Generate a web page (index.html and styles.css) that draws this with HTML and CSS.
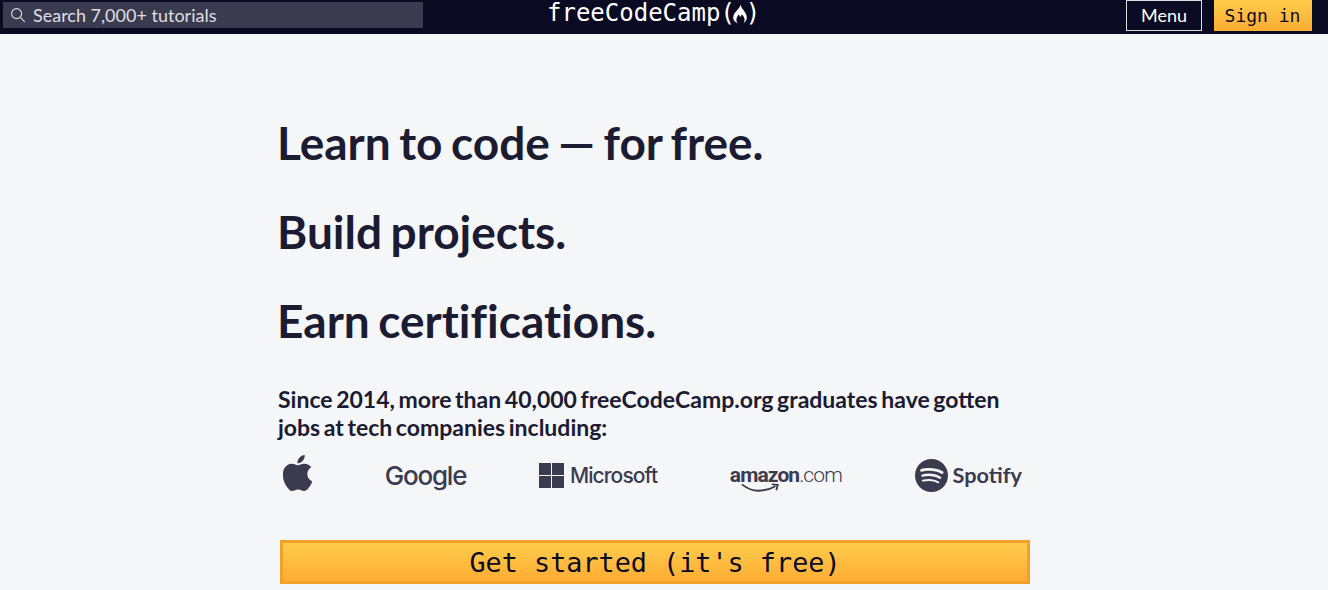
FILE: index.html
```html
<!DOCTYPE html>
<html lang="en">
<head>
    <meta charset="UTF-8">
    <meta name="viewport" content="width=device-width, initial-scale=1.0">
    <title>Learn to Code - for Free</title>
    <link rel="stylesheet" href="styles.css">
</head>
<body>
    <!-- Top Nav -->
    <header class="nav">
        <div class="search">
            <svg class="search-icon" viewBox="0 0 16 16" width="16" height="16">
                <circle cx="6.6" cy="6.6" r="5" fill="none" stroke="#dfdfe2" stroke-width="1.1"></circle>
                <line x1="10.3" y1="10.3" x2="14.8" y2="14.8" stroke="#dfdfe2" stroke-width="1.1"></line>
            </svg>
            <span>Search 7,000+ tutorials</span>
        </div>
        <div class="logo">
            <span>freeCodeCamp(</span>
            <svg class="flame" viewBox="0 0 16 20" width="16" height="20">
                <path fill="#fff" d="M8.6 0.4c.5 2.600 1.600 3.800 3 5.900 1.500 2.200 3.200 4.600 3.200 7.300 0 2.700-1.500 4.700-3.600 5.800.9-1 1.400-2.300 1.400-3.700 0-2.200-1.500-3.900-2.700-5.500-.5 1.300-1 2-1.800 2.700-.4-1.100-.7-1.800-1.400-2.500-1.300 1.800-2.300 3.400-2.300 5.400 0 1.400.5 2.600 1.400 3.600C3 18.300 1.200 16.300 1.200 13.600c0-3.100 2-5.200 3.800-7.400C6.500 4.400 8.300 2.800 8.600 .4z"></path>
            </svg>
            <span>)</span>
        </div>
        <div class="nav-buttons">
            <button class="menu-btn">Menu</button>
            <button class="signin-btn">Sign in</button>
        </div>
    </header>

    <!-- Landing Section -->
    <main class="landing">
        <h1>Learn to code — for free.</h1>
        <h1>Build projects.</h1>
        <h1>Earn certifications.</h1>
        <p class="since">Since 2014, more than 40,000 freeCodeCamp.org graduates have gotten jobs at tech companies including:</p>

        <div class="logos">
            <svg class="apple" viewBox="2.500 0 19 24" width="29" height="36">
                <path fill="#3b3b4f" d="M12.152 6.896c-.948 0-2.415-1.078-3.96-1.04-2.04.027-3.91 1.183-4.961 3.014-2.117 3.675-.546 9.103 1.519 12.09 1.013 1.454 2.208 3.09 3.792 3.039 1.52-.065 2.09-.987 3.935-.987 1.831 0 2.35.987 3.96.948 1.637-.026 2.676-1.48 3.676-2.948 1.156-1.688 1.636-3.325 1.662-3.415-.039-.013-3.182-1.221-3.22-4.857-.026-3.04 2.48-4.494 2.597-4.559-1.429-2.09-3.623-2.324-4.39-2.376-2-.156-3.675 1.09-4.61 1.09zM15.53 3.83c.843-1.012 1.4-2.427 1.245-3.83-1.207.052-2.662.805-3.532 1.818-.78.896-1.454 2.338-1.273 3.714 1.338.104 2.715-.688 3.559-1.701"></path>
            </svg>
            <span class="google">Google</span>
            <div class="microsoft">
                <div class="ms-squares"><i></i><i></i><i></i><i></i></div>
                <span>Microsoft</span>
            </div>
            <div class="amazon">
                <span><b>amazon</b>.com</span>
                <svg class="smile" viewBox="0 0 42 11" width="40" height="10">
                    <path fill="none" stroke="#3b3b4f" stroke-width="2" d="M1 1.500c6 4.500 12 7 18 7 7 0 13-1.500 19-5"></path>
                    <path fill="none" stroke="#3b3b4f" stroke-width="2" d="M34 1.500l6.500 .5-1.500 6"></path>
                </svg>
            </div>
            <div class="spotify">
                <svg viewBox="0 0 24 24" width="33" height="33">
                    <path fill="#3b3b4f" d="M12 0C5.4 0 0 5.4 0 12s5.4 12 12 12 12-5.4 12-12S18.66 0 12 0zm5.521 17.34c-.24.359-.66.48-1.021.24-2.82-1.74-6.36-2.101-10.561-1.141-.418.122-.779-.179-.899-.539-.12-.421.18-.78.54-.9 4.56-1.021 8.52-.6 11.64 1.32.42.18.479.659.301 1.02zm1.44-3.3c-.301.42-.841.6-1.262.3-3.239-1.98-8.159-2.58-11.939-1.38-.479.12-1.02-.12-1.14-.6-.12-.48.12-1.021.6-1.141C9.6 9.9 15 10.561 18.72 12.84c.361.181.54.78.241 1.2zm.12-3.36C15.24 8.4 8.82 8.16 5.16 9.301c-.6.179-1.2-.181-1.38-.721-.18-.601.18-1.2.72-1.381 4.26-1.26 11.28-1.02 15.721 1.621.539.3.719 1.02.419 1.56-.299.421-1.02.599-1.559.3z"></path>
                </svg>
                <span>Spotify</span>
            </div>
        </div>

        <button class="cta">Get started (it's free)</button>
    </main>
</body>
</html>
```

FILE: styles.css
```css
body {
    margin: 0;
    height: 590px;
    overflow: hidden;
    background: #f5f6f7;
    color: #1b1b32;
    font-family: Lato, sans-serif;
}

/* Top Nav */
.nav {
    display: flex;
    align-items: flex-start;
    height: 34px;
    padding: 0 16px 0 3px;
    background: #0a0a23;
}

.search {
    display: flex;
    align-items: center;
    gap: 7px;
    width: 413px;
    height: 26px;
    margin-top: 2px;
    padding-left: 7px;
    background: #3b3b4f;
    color: #dfdfe2;
    font-size: 18px;
}

.logo {
    display: flex;
    align-items: center;
    height: 26px;
    margin-left: 124px;
    color: #fff;
    font-family: "DejaVu Sans Mono", monospace;
    font-size: 24px;
    white-space: nowrap;
}

.flame {
    margin: 2px -2px 0 -3px;
}

.nav-buttons {
    display: flex;
    gap: 12px;
    margin-left: auto;
}

.menu-btn {
    width: 76px;
    height: 31px;
    padding: 0 0 2px;
    border: 1px solid #dfdfe2;
    background: #0a0a23;
    color: #fff;
    font-family: Lato, sans-serif;
    font-size: 18px;
}

.signin-btn {
    width: 98px;
    height: 31px;
    padding: 0 1px 0 0;
    border: none;
    background: linear-gradient(#fecc4c, #ffac33);
    color: #0a0a23;
    font-family: "DejaVu Sans Mono", monospace;
    font-size: 18px;
}

/* Landing Section */
.landing {
    width: 752px;
    margin-left: 278px;
    padding-top: 81px;
}

h1 {
    height: 56px;
    margin: 0 0 33px;
    margin-left: -1px;
    font-size: 46px;
    font-weight: 700;
    line-height: 56px;
    word-spacing: -2.700px;
    font-variant-ligatures: none;
}

.since {
    margin: 0;
    padding-top: 3px;
    font-size: 23px;
    font-weight: 700;
    line-height: 28px;
    word-spacing: -2px;
}

/* Company Logos */
.logos {
    display: flex;
    align-items: center;
    justify-content: space-between;
    height: 44px;
    margin-top: 12px;
    padding: 0 8px 0 5px;
    color: #3b3b4f;
}

.apple {
    margin-top: -4px;
}

.google {
    font-family: Inter, sans-serif;
    font-size: 26px;
    font-weight: 500;
    letter-spacing: -1.200px;
}

.microsoft {
    display: flex;
    align-items: center;
    gap: 6px;
    font-family: Inter, sans-serif;
    font-size: 21px;
    font-weight: 500;
    letter-spacing: -0.900px;
}

.ms-squares {
    display: grid;
    grid-template-columns: 12px 12px;
    grid-template-rows: 12px 12px;
    gap: 1px;
}

.ms-squares i {
    background: #3b3b4f;
}

.amazon {
    display: flex;
    flex-direction: column;
    align-items: flex-start;
    font-family: Roboto, sans-serif;
    font-size: 21px;
    font-weight: 300;
    line-height: 20px;
    letter-spacing: -0.900px;
}

.amazon b {
    font-weight: 700;
}

.smile {
    margin: -2px 0 -8px 10px;
}

.spotify {
    display: flex;
    align-items: center;
    gap: 5px;
    font-family: Lato, sans-serif;
    font-size: 21.700px;
    font-weight: 700;
}

/* Get Started Button */
.cta {
    display: block;
    width: 750px;
    height: 44px;
    margin: 43px 0 0 2px;
    padding: 0;
    border: 3px solid #f1a02a;
    background: linear-gradient(#fecc4c, #ffac33);
    color: #0a0a23;
    font-family: "DejaVu Sans Mono", monospace;
    font-size: 26.800px;
}
```
